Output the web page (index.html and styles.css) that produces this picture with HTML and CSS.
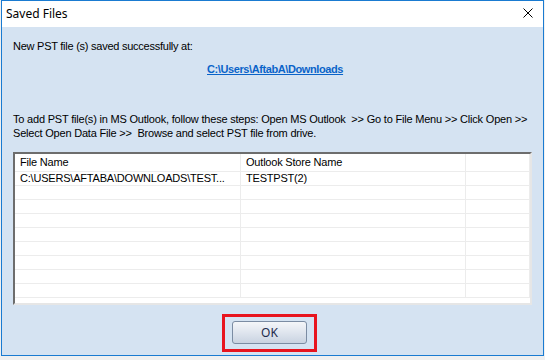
FILE: index.html
```html
<!DOCTYPE html>
<html lang="en">
<head>
  <meta charset="UTF-8">
  <title>Saved Files</title>
  <link rel="stylesheet" href="styles.css">
</head>
<body>

  <div class="window">
    <div class="titlebar">
      <span class="title">Saved Files</span>
      <svg class="close" width="10" height="10" viewBox="0 0 10 10">
        <path d="M0.5 0.5 L9.5 9.5 M9.5 0.5 L0.5 9.5" stroke="#000" stroke-width="1" fill="none"/>
      </svg>
    </div>

    <div class="content">
      <div class="msg">New PST file (s) saved successfully at:</div>
      <div class="path"><a href="#">C:\Users\AftabA\Downloads</a></div>

      <div class="steps">
        To add PST file(s) in MS Outlook, follow these steps: Open MS Outlook&nbsp; &gt;&gt; Go to File Menu &gt;&gt; Click Open &gt;&gt;<br>
        Select Open Data File &gt;&gt;&nbsp; Browse and select PST file from drive.
      </div>

      <div class="listbox">
        <table class="grid">
          <tr class="head">
            <td class="c1">File Name</td>
            <td class="c2">Outlook Store Name</td>
            <td class="c3"></td>
          </tr>
          <tr>
            <td>C:\USERS\AFTABA\DOWNLOADS\TEST...</td>
            <td>TESTPST(2)</td>
            <td></td>
          </tr>
          <tr><td></td><td></td><td></td></tr>
          <tr><td></td><td></td><td></td></tr>
          <tr><td></td><td></td><td></td></tr>
          <tr><td></td><td></td><td></td></tr>
          <tr><td></td><td></td><td></td></tr>
          <tr><td></td><td></td><td></td></tr>
          <tr><td></td><td></td><td></td></tr>
          <tr><td></td><td></td><td></td></tr>
        </table>
      </div>

      <div class="highlight">
        <button class="ok">OK</button>
      </div>
    </div>
  </div>

</body>
</html>
```

FILE: styles.css
```css
body {
  margin: 0;
  background: #f0f0f0;
  font-family: 'Liberation Sans', Arial, sans-serif;
  font-size: 11px;
  color: #000;
}

.window {
  box-sizing: border-box;
  width: 543px;
  height: 356px;
  margin-left: 1px;
  border: 1px solid #1a7bd1;
  display: flex;
  flex-direction: column;
  background: #d5e3f2;
}

.titlebar {
  height: 26px;
  flex: none;
  background: #fff;
  display: flex;
  align-items: center;
  justify-content: space-between;
  padding: 0 10px 0 4px;
}

.title {
  font-family: 'Noto Sans', sans-serif;
  font-size: 12px;
  margin-top: -2px;
}

.close {
  margin-top: -3px;
}

.content {
  flex: 1;
  padding: 12px 11px 0 11px;
  display: flex;
  flex-direction: column;
}

.msg {
  line-height: 14px;
  letter-spacing: -0.25px;
}

.path {
  margin-top: 9px;
  line-height: 14px;
  padding-left: 194px;
}

.path a {
  color: #0a63c9;
  font-weight: bold;
  letter-spacing: -0.4px;
}

.steps {
  margin-top: 36px;
  line-height: 14px;
  white-space: nowrap;
  letter-spacing: -0.2px;
}

.listbox {
  margin-top: 12px;
  width: 519px;
  height: 153px;
  box-sizing: border-box;
  border-top: 2px solid #6d6d6d;
  border-left: 2px solid #6d6d6d;
  border-right: 2px solid #e6e6e6;
  border-bottom: 2px solid #e6e6e6;
  background: #fff;
  overflow: hidden;
}

.grid {
  border-collapse: collapse;
  width: 100%;
  table-layout: fixed;
  letter-spacing: -0.2px;
}

.grid td {
  height: 13px;
  padding: 0 0 0 5px;
  border-right: 1px solid #ececec;
  border-bottom: 1px solid #ececec;
  line-height: 13px;
  white-space: nowrap;
  overflow: hidden;
}

.grid .head td {
  height: 17px;
  line-height: 17px;
}

.grid .c1 {
  width: 220px;
}

.grid .c2 {
  width: 219px;
}

.highlight {
  margin: 9px 0 0 209px;
  width: 95px;
  height: 38px;
  box-sizing: border-box;
  border: 3px solid #e8141e;
  padding: 4px 0 0 7px;
}

.ok {
  width: 75px;
  height: 23px;
  border: 1px solid #7b8ca3;
  border-radius: 3px;
  background: linear-gradient(#f4f6f9, #dfe5ee 50%, #c9d3e1);
  font-family: 'Noto Sans', sans-serif;
  font-size: 12px;
  color: #1d2b4c;
  padding: 0;
  cursor: pointer;
}
```
